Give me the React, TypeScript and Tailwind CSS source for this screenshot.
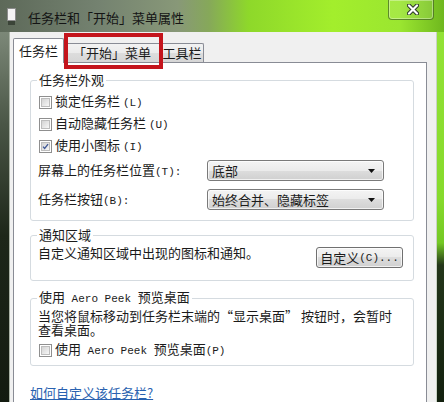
import type { ReactNode } from "react";

function Lat({ children }: { children: ReactNode }) {
  return <span className="font-['Liberation_Mono',monospace] text-[11px]">{children}</span>;
}

function Checkbox({ checked = false }: { checked?: boolean }) {
  return (
    <span className="flex h-[13px] w-[13px] shrink-0 border border-[#8f8f8f] bg-white p-[1px]">
      <span className="flex h-full w-full items-center justify-center border border-[#bdbdbd] bg-gradient-to-br from-[#d3d3d3] to-[#f7f7f7]">
        {checked && (
          <svg width="9" height="9" viewBox="0 0 9 9">
            <path d="M1.3 4.6 L3.4 7 L7.8 1.4" fill="none" stroke="#3f5896" strokeWidth="1.7" />
          </svg>
        )}
      </span>
    </span>
  );
}

function CheckRow({ checked, children }: { checked?: boolean; children: ReactNode }) {
  return (
    <label className="flex h-[22px] items-center gap-[3px] pl-[1px]">
      <Checkbox checked={checked} />
      <span className="leading-[14px]">{children}</span>
    </label>
  );
}

function Select({ value }: { value: string }) {
  return (
    <div className="flex h-[21px] w-[177px] items-center justify-between rounded-[3px] border border-[#7a7a7a] bg-[linear-gradient(to_bottom,#f4f4f4_0%,#ebebeb_50%,#dddddd_50%,#d0d0d0_100%)] pl-[4px] pr-[8px] shadow-[inset_0_0_0_1px_rgba(255,255,255,0.7)]">
      <span className="leading-[14px]">{value}</span>
      <svg width="7" height="4" viewBox="0 0 7 4">
        <path d="M0 0h7L3.5 4z" fill="#111" />
      </svg>
    </div>
  );
}

function Group({ title, className, children }: { title: ReactNode; className?: string; children: ReactNode }) {
  return (
    <fieldset className={`rounded-[3px] border border-[#d5dbe0] pl-[7px] ${className ?? ""}`}>
      <legend className="ml-[-1px] px-[2px] leading-[14px]">{title}</legend>
      {children}
    </fieldset>
  );
}

function TitleBar() {
  return (
    <div className="flex h-[32px] items-start bg-[linear-gradient(to_right,#5d6959_0%,#748270_22%,#889878_40%,#86a85a_47%,#8ed82a_56%,#a3ee2c_75%,#9be630_90%,#6fb81e_100%)]">
      <svg className="ml-[7px] mt-[8px]" width="10" height="18" viewBox="0 0 10 18">
        <rect x="0.5" y="0.5" width="8" height="12" fill="#f4f4f4" stroke="#8c8c8c" />
        <rect x="1" y="13" width="7" height="4" fill="#3b4438" />
      </svg>
      <span className="ml-[11px] mt-[10px] text-[13px] leading-[16px] text-[#141414]">
        任务栏和「开始」菜单属性
      </span>
      <div className="ml-auto mr-[10px] flex h-[20px] w-[46px] items-center justify-center rounded-b-[4px] border border-t-0 border-[#3f5f22]/70 bg-white/10 pl-[4px] shadow-[inset_0_0_0_1px_rgba(255,255,255,0.35)]">
        <svg width="12" height="11" viewBox="0 0 12 11">
          <path d="M2 1.5 L10 9.5 M10 1.5 L2 9.5" stroke="#2d3a2a" strokeWidth="4.2" strokeLinecap="round" />
          <path d="M2 1.5 L10 9.5 M10 1.5 L2 9.5" stroke="#ffffff" strokeWidth="2.2" strokeLinecap="round" />
        </svg>
      </div>
    </div>
  );
}

function Tabs() {
  return (
    <div className="relative flex h-[24px] items-end">
      <div className="relative z-10 -mb-[1px] flex h-[25px] w-[51px] items-center justify-center rounded-t-[2px] border border-b-0 border-[#898c95] bg-white pb-[1px]">
        任务栏
      </div>
      <div className="flex h-[19px] w-[97px] items-center justify-center rounded-t-[2px] border border-b-0 border-l-0 border-[#898c95] bg-[linear-gradient(to_bottom,#f2f2f2_0%,#ebebeb_50%,#dddddd_50%,#d6d6d6_100%)]">
        「开始」菜单
      </div>
      <div className="flex h-[19px] w-[43px] items-center justify-center rounded-t-[2px] border border-b-0 border-l-0 border-[#898c95] bg-[linear-gradient(to_bottom,#f2f2f2_0%,#ebebeb_50%,#dddddd_50%,#d6d6d6_100%)]">
        工具栏
      </div>
      <div className="pointer-events-none absolute left-[51px] top-[-5px] z-20 h-[36px] w-[99px] border-[4px] border-[#c4141c]" />
    </div>
  );
}

export default function App() {
  return (
    <div className="h-[402px] w-[444px] overflow-hidden bg-[#1a2417] font-['Noto_Sans_CJK_SC',sans-serif] text-[13px] text-[#1b1b1b]">
      <TitleBar />
      <div className="flex h-[370px]">
        <div className="w-[10px] border-r border-[#aab3a6] bg-[linear-gradient(to_bottom,#7c8878_0%,#4a5646_25%,#1d2719_55%,#131b10_100%)]" />
        <div className="flex flex-1 flex-col bg-[#f0f0f0] pl-[3px] pr-[9px] pt-[6px]">
          <Tabs />
          <div className="flex flex-1 flex-col border border-b-0 border-[#898c95] bg-white pl-[16px] pr-[12px] pt-[10px]">
            <Group title="任务栏外观" className="pb-[10px]">
              <div className="flex flex-col pt-[4px]">
                <CheckRow>
                  锁定任务栏 <Lat>(L)</Lat>
                </CheckRow>
                <CheckRow>
                  自动隐藏任务栏 <Lat>(U)</Lat>
                </CheckRow>
                <CheckRow checked>
                  使用小图标 <Lat>(I)</Lat>
                </CheckRow>
              </div>
              <div className="mt-[3px] grid grid-cols-[169px_177px] items-center gap-y-[8px]">
                <span className="leading-[14px]">
                  屏幕上的任务栏位置<Lat>(T):</Lat>
                </span>
                <Select value="底部" />
                <span className="leading-[14px]">
                  任务栏按钮<Lat>(B):</Lat>
                </span>
                <Select value="始终合并、隐藏标签" />
              </div>
            </Group>

            <Group title="通知区域" className="mt-[7px] pb-[12px] pr-[10px]">
              <div className="flex items-start justify-between pt-[4px]">
                <span className="leading-[14px]">自定义通知区域中出现的图标和通知。</span>
                <button className="mt-[1px] flex h-[21px] w-[87px] items-center justify-center rounded-[3px] border border-[#707070] bg-[linear-gradient(to_bottom,#f4f4f4_0%,#ebebeb_50%,#dddddd_50%,#d0d0d0_100%)] leading-[14px] shadow-[inset_0_0_0_1px_rgba(255,255,255,0.7)]">
                  自定义<Lat>(C)...</Lat>
                </button>
              </div>
            </Group>

            <Group
              title={
                <>
                  使用<Lat> Aero Peek </Lat>预览桌面
                </>
              }
              className="mt-[9px] pb-[7px]"
            >
              <p className="pt-[3px] leading-[14px]">
                当您将鼠标移动到任务栏末端的“显示桌面” 按钮时，会暂时
                <br />
                查看桌面。
              </p>
              <label className="mt-[5px] flex h-[16px] items-center gap-[3px] pl-[1px]">
                <Checkbox />
                <span className="leading-[14px]">
                  使用<Lat> Aero Peek </Lat>预览桌面<Lat>(P)</Lat>
                </span>
              </label>
            </Group>

            <a href="#" className="mt-[20px] self-start leading-[14px] text-[#2a62b0] underline">
              如何自定义该任务栏?
            </a>
          </div>
        </div>
        <div className="w-[8px] border-l border-[#c9d2c4] bg-[linear-gradient(to_bottom,#93e236_0%,#86da2c_45%,#74c824_57%,#24361a_63%,#12200e_100%)]" />
      </div>
    </div>
  );
}
